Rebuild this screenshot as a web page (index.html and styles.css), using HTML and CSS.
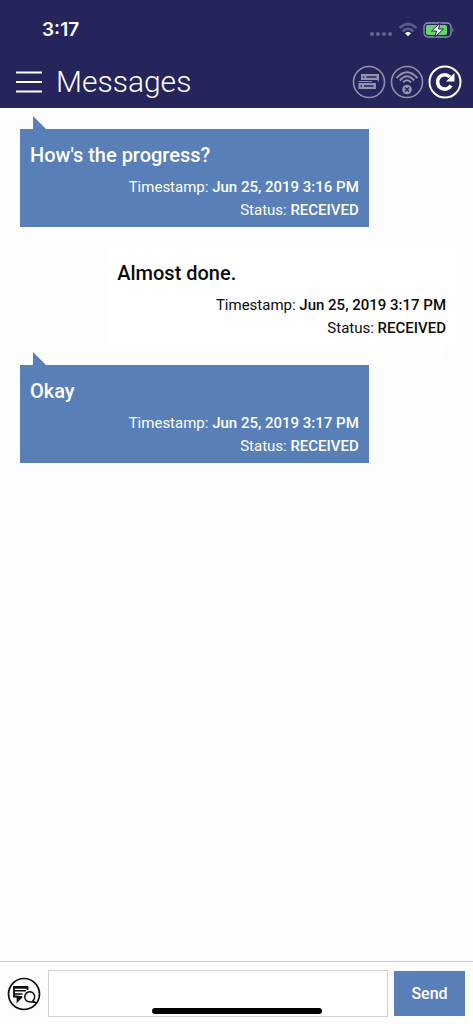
FILE: index.html
```html
<!DOCTYPE html>
<html lang="en">
<head>
<meta charset="utf-8">
<meta name="viewport" content="width=device-width, initial-scale=1">
<title>Messages</title>
<link rel="stylesheet" href="styles.css">
</head>
<body>
<header class="top">
  <div class="status-bar">
    <span class="clock">3:17</span>
    <div class="indicators">
      <svg width="24" height="8" viewBox="0 0 24 8" fill="#66668f" aria-hidden="true"><circle cx="3" cy="5" r="2"/><circle cx="9" cy="5" r="2"/><circle cx="15" cy="5" r="2"/><circle cx="21" cy="5" r="2"/></svg>
      <svg width="20" height="16" viewBox="0 0 20 16" fill="none" stroke="#5c5c88" stroke-width="2.6" aria-hidden="true"><path d="M1.5 6Q10-1.700 18.500 6M4.600 9.300Q10 4.300 15.400 9.300"/><path d="M7 11.300Q10 8.800 13 11.300L10 14.300Z" fill="#fff" stroke="none"/></svg>
      <svg width="32" height="18" viewBox="0 0 32 18" aria-hidden="true"><rect x="1" y="2" width="27" height="14" rx="4" fill="none" stroke="#9191b0" stroke-width="1.300"/><rect x="3" y="4" width="21" height="10" rx="2" fill="#65d567"/><path d="M29.500 6.500Q31.500 9 29.500 11.500Z" fill="#9191b0"/><path d="M17 2L8.500 10H13.500L12 16L20.500 8H15.500Z" fill="#fff" stroke="#25255c" stroke-width="1"/></svg>
    </div>
  </div>
  <div class="nav">
    <button class="icon-btn menu" aria-label="Menu"><svg width="26" height="24" viewBox="0 0 26 24" stroke="#fff" stroke-width="2.200"><path d="M0 2.500H26M0 12H26M0 21.500H26"/></svg></button>
    <h1 class="title">Messages</h1>
    <div class="actions">
      <button class="icon-btn" aria-label="Server"><svg width="34" height="34" viewBox="0 0 34 34" fill="none" stroke="#9292ae" stroke-width="1.600"><circle cx="17" cy="17" r="15.500"/><path d="M9 9H27V15H9ZM6.500 18H24V24H6.500Z" fill="#9292ae" stroke="none"/><path d="M14.500 12H24.500M12 21H21.500" stroke="#25255c" stroke-width="1.500"/><path d="M11 12H12.500M8.500 21H10" stroke="#25255c" stroke-width="1.500"/><path d="M6.500 16.500H20M26.300 15V16.500" stroke-width="1.200"/></svg></button>
      <button class="icon-btn" aria-label="Connection"><svg width="34" height="34" viewBox="0 0 34 34" fill="none" stroke="#9292ae" stroke-width="1.600"><circle cx="17" cy="17" r="15.500"/><path d="M6.500 13.200Q17 1.500 27.500 13.200M9.800 15.500Q17 6.800 24.200 15.500M13 17.400Q17 13 21 17.400" stroke-width="2"/><circle cx="17" cy="24.500" r="4.800" fill="#9292ae" stroke="none"/><path d="M15 22.500L19 26.500M19 22.500L15 26.500" stroke="#25255c" stroke-width="1.400"/></svg></button>
      <button class="icon-btn" aria-label="Refresh"><svg width="34" height="34" viewBox="0 0 34 34" fill="none" stroke="#fff"><circle cx="17" cy="17" r="15.500" stroke-width="2"/><path d="M22 12A7.200 7.200 0 1 0 23 20.500" stroke-width="3.600"/><path d="M26.500 8V16.500H18Z" fill="#fff" stroke="none"/></svg></button>
    </div>
  </div>
</header>
<main class="thread">
  <article class="bubble incoming">
    <p class="text">How's the progress?</p>
    <p class="meta">Timestamp: <b>Jun 25, 2019 3:16 PM</b></p>
    <p class="meta">Status: <b>RECEIVED</b></p>
  </article>
  <article class="bubble outgoing">
    <p class="text">Almost done.</p>
    <p class="meta">Timestamp: <b>Jun 25, 2019 3:17 PM</b></p>
    <p class="meta">Status: <b>RECEIVED</b></p>
  </article>
  <article class="bubble incoming">
    <p class="text">Okay</p>
    <p class="meta">Timestamp: <b>Jun 25, 2019 3:17 PM</b></p>
    <p class="meta">Status: <b>RECEIVED</b></p>
  </article>
</main>
<form class="composer">
  <button class="icon-btn" type="button" aria-label="Canned messages"><svg width="34" height="34" viewBox="0 0 34 34" fill="none" stroke="#0b0b0b"><circle cx="17" cy="17" r="15.500" stroke-width="1.700"/><path d="M20.500 13V10H7V19.500H10.500V24L15 19.500" stroke-width="1.800"/><path d="M7 10.500H20.500" stroke-width="2.400"/><path d="M7 13.700H19M7 17H15.500" stroke-width="1.400"/><path d="M10.500 19V23.500L14.500 19Z" fill="#0b0b0b" stroke="none"/><path d="M26 23.500A5 5 0 1 0 22 24.700Q24.500 25 27.800 25.200Z" stroke-width="1.500"/></svg></button>
  <input class="field" type="text" aria-label="Message">
  <button class="send" type="submit">Send</button>
  <span class="home-bar"></span>
</form>
</body>
</html>
```
FILE: styles.css
```css
* { box-sizing: border-box; }
body {
  margin: 0;
  min-height: 100vh;
  display: flex;
  flex-direction: column;
  background: #fdfdfd;
  color: #0b0b0b;
  font-family: Roboto, "Liberation Sans", sans-serif;
}
.top { background: #25255c; color: #fff; }
.status-bar {
  display: flex;
  justify-content: space-between;
  align-items: center;
  height: 56px;
  padding: 4px 18px 0 42px;
}
.clock { font: 600 19px/24px Inter, sans-serif; }
.indicators { display: flex; align-items: center; gap: 5px; }
.indicators svg:first-child { margin-top: 6px; }
.nav {
  display: flex;
  align-items: center;
  height: 52px;
  padding: 0 11px 0 16px;
}
.icon-btn {
  display: block;
  flex: none;
  padding: 0;
  border: 0;
  background: none;
}
.icon-btn svg { display: block; }
.title { margin: 0 0 0 14px; font-size: 30px; line-height: 40px; font-weight: 300; }
.actions { display: flex; gap: 4px; margin-left: auto; }
.thread {
  flex: 1;
  display: flex;
  flex-direction: column;
  gap: 20px;
  padding: 21px 17px 21px 20px;
}
.bubble { position: relative; width: 80%; padding: 12px 10px 5px; }
.bubble::after { content: ""; position: absolute; width: 13px; height: 13px; }
.incoming { background: #587fb8; color: #fff; }
.incoming::after {
  left: 13px;
  bottom: 100%;
  background: #587fb8;
  clip-path: polygon(0 0, 100% 100%, 0 100%);
}
.outgoing { align-self: flex-end; background: #fff; }
.outgoing::after {
  right: 13px;
  top: 100%;
  background: #fff;
  clip-path: polygon(0 0, 100% 0, 100% 100%);
}
.text { margin: 0 0 7px; font-size: 20px; line-height: 28px; font-weight: 500; }
.meta { margin: 0; font-size: 15px; line-height: 23px; text-align: right; }
.meta b { font-weight: 500; }
.composer {
  position: relative;
  display: flex;
  align-items: center;
  gap: 6px;
  padding: 8px 8px 7px 7px;
  border-top: 1px solid #cfcfcf;
}
.field {
  flex: 1;
  min-width: 0;
  height: 47px;
  margin-left: 1px;
  padding: 0 10px;
  border: 1px solid #d0d0d0;
  background: #fff;
  font: 400 18px/24px Roboto, sans-serif;
}
.send {
  width: 71px;
  height: 45px;
  padding: 0;
  border: 0;
  background: #587fb8;
  color: #fff;
  font: 500 16px/24px Roboto, sans-serif;
}
.home-bar {
  position: absolute;
  left: 50%;
  bottom: 10px;
  width: 170px;
  height: 6px;
  margin-left: -85px;
  border-radius: 3px;
  background: #000;
}
```
